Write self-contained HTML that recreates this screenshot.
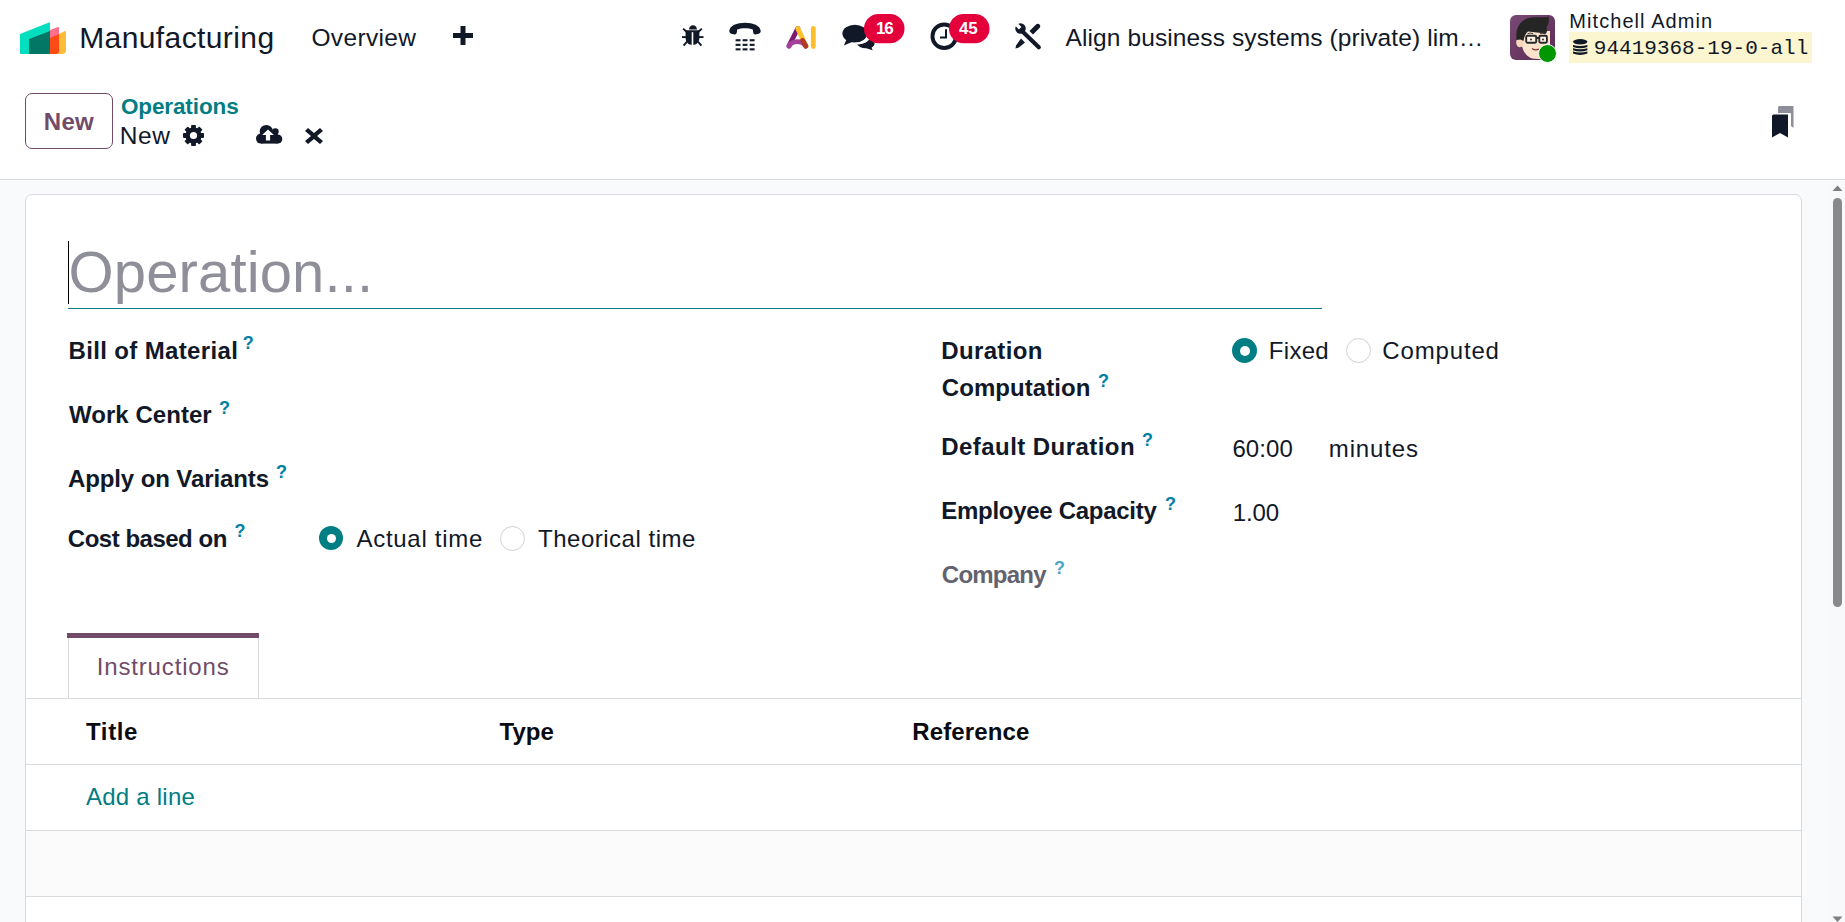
<!DOCTYPE html>
<html><head><meta charset="utf-8">
<style>
html,body{margin:0;padding:0;}
body{width:1845px;height:922px;overflow:hidden;position:relative;background:#fff;font-family:"Liberation Sans",sans-serif;color:#111827;}
.t{position:absolute;white-space:nowrap;line-height:1;}
.b{font-weight:bold;}
.ab{position:absolute;}
</style></head>
<body>


<!-- NAVBAR -->
<svg class="ab" style="left:20px;top:22px" width="48" height="33" viewBox="0 0 48 33">
  <path d="M0 12 L29 0.5 Q30 0.2 30 1.5 L30 32 L1 32 Q0 32 0 31 Z" fill="#00DEC0"/>
  <path d="M9 17 L30 9 L30 32 L9 32 Z" fill="#027766"/>
  <path d="M30 8 L38 5 Q39 4.8 39 6 L39 31 Q39 32 37.5 32 L30 32 Z" fill="#FE6F8C"/>
  <path d="M30 16 L39 12 L39 29 Q39 32 36 32 L29 32 Q30 32 30 29 Z" fill="#FE4A14"/>
  <path d="M39 12 L45 9 Q46 8.8 46 10 L46 28 Q46 32 42 32 L36 32 Q39 32 39 29 Z" fill="#FDBD38"/>
</svg>
<svg class="ab" style="left:453px;top:26px" width="20" height="19" viewBox="0 0 20 19"><path d="M7.5 0h5v7h7.5v5h-7.5v7h-5v-7h-7.5v-5h7.5z" fill="#111827"/></svg>

<!-- systray -->
<svg class="ab" style="left:660px;top:0px" width="400" height="80" viewBox="660 0 400 80">
<g fill="#111827">
<path d="M689 29.6 A4 4.4 0 0 1 697 29.6 Z"/>
<path d="M685.6 30.3 H699.4 V37.5 C699.4 42.3 696.6 45 692.5 45 C688.4 45 685.6 42.3 685.6 37.5 Z"/>
</g>
<g stroke="#111827" stroke-width="1.9" fill="none">
<path d="M682 37.1 H703.5"/>
<path d="M683.2 28.6 L687 32.2 M701.8 28.6 L698 32.2 M687 41.6 L683.6 45.6 M698 41.6 L701.4 45.6"/>
</g>
<rect x="691.7" y="32.2" width="1.6" height="13" fill="#fff"/>
<g fill="#111827">
<path d="M729.3 31 C729.8 25.5 737 22.8 745 22.8 C753 22.8 760.2 25.5 760.7 31 C760.7 32.6 759.8 33.4 758.5 33.8 L755.5 34.4 C754.2 34.6 753.4 33.8 753.2 32.6 L752.8 29.6 C748.5 27.8 741.5 27.8 737.2 29.6 L736.8 32.6 C736.6 33.8 735.8 34.6 734.5 34.4 L731.5 33.8 C730.2 33.4 729.3 32.6 729.3 31 Z"/>
<rect x="735.6" y="39.2" width="4.9" height="2.1"/><rect x="742.6" y="39.2" width="4.9" height="2.1"/><rect x="749.7" y="39.2" width="4.9" height="2.1"/>
<rect x="735.6" y="43.8" width="4.9" height="2.1"/><rect x="742.6" y="43.8" width="4.9" height="2.1"/><rect x="749.7" y="43.8" width="4.9" height="2.1"/>
<rect x="735.6" y="48.3" width="4.9" height="2.1"/><rect x="742.6" y="48.3" width="4.9" height="2.1"/><rect x="749.7" y="48.3" width="4.9" height="2.1"/>
</g>
<g fill="none" stroke-linecap="round" stroke-width="4.8">
<path d="M789 45.8 L797.8 28.4" stroke="#7E1A6E"/>
<path d="M797.8 28.4 L806 46" stroke="#FBBF2D"/>
<path d="M789 46.2 C791.5 40.5 802 39.5 805.6 46.2" stroke="#A4409A"/>
<path d="M802.6 40.4 L806 46.2" stroke="#B03A22"/>
<path d="M813.3 28.4 V46.6" stroke="#FBBF2D"/>
</g>
<g fill="#111827">
<ellipse cx="854.8" cy="33.6" rx="12.4" ry="8.9"/>
<path d="M846.5 39.5 L843.8 45.4 L852.5 41.8 Z"/>
<path d="M857 44.3 C863.5 44.3 868 41.5 869.8 37.2 C872.8 38.6 874.6 40.8 874.6 43.2 C874.6 45 873.4 46.6 871.6 47.6 L872.6 50.2 L866.3 48.2 C862.5 48.5 859 47 857 44.3 Z"/>
</g>
<path d="M855.5 43.6 C862.8 43.8 868.8 40.8 870.2 36" stroke="#fff" stroke-width="1.8" fill="none"/>
<rect x="864" y="14" width="40.5" height="29.3" rx="14.6" fill="#E4003B"/>
<circle cx="944.2" cy="36.2" r="11.75" stroke="#111827" stroke-width="3.9" fill="none"/>
<path d="M945 29.2 H947 V38.6 H940 V36.5 H945 Z" fill="#111827"/>
<rect x="949" y="14" width="40.5" height="29.3" rx="14.6" fill="#E4003B"/>
<g>
<path d="M1029.5 31 L1036 24.5 C1037 23.5 1038.6 23.5 1039.5 24.5 C1040.5 25.5 1040.5 27.1 1039.5 28 L1033 34.5 Z" fill="#111827"/>
<path d="M1021 38.6 L1025 42.4 L1018.8 47.6 L1015.4 48.6 L1016.2 45.2 Z" fill="#111827"/>
<path d="M1023 32 L1038.8 47.2" stroke="#fff" stroke-width="7.5" stroke-linecap="round"/>
<path d="M1023 32 L1038.8 47.2" stroke="#111827" stroke-width="4.2" stroke-linecap="round"/>
<circle cx="1020.5" cy="28.5" r="5.2" fill="#111827"/>
<path d="M1013.5 21.5 L1020.2 28.2" stroke="#fff" stroke-width="3.6" stroke-linecap="butt"/>
<path d="M1018 26 L1020.5 28.5" stroke="#111827" stroke-width="0"/>
</g>
</svg>

<!-- avatar -->
<div class="ab" style="left:1510px;top:15px;width:45px;height:45px;border-radius:6px;background:linear-gradient(135deg,#7a4a76,#5a2a54);overflow:hidden;">
<svg width="45" height="45" viewBox="0 0 45 45">
<path d="M11 16 C10 30 13 40 22 43.5 L40 45 L40 16 Z" fill="#fbe3cc"/>
<ellipse cx="9.8" cy="27.5" rx="3.6" ry="4.8" fill="#f8d7bb"/>
<path d="M6.5 25 C5 12 11 3.5 22 2.5 C30 2 35 3 38.5 1.5 C39.5 6 38.5 10 36.5 12 C37.5 15 37 18 35.5 19 C30 17.5 24 17 18 16.5 C15.5 18.5 14 22 13.5 26 L10.5 24.5 Z" fill="#252525"/>
<rect x="16.2" y="20.8" width="10" height="7" rx="1.2" stroke="#2a2a2a" stroke-width="1.9" fill="#fff3e6"/>
<rect x="29.3" y="20.8" width="7.6" height="7" rx="1.2" stroke="#2a2a2a" stroke-width="1.9" fill="#fff3e6"/>
<path d="M26.2 23 H29.3" stroke="#2a2a2a" stroke-width="1.8"/>
<path d="M17.5 18.8 Q20 17.5 23 18.5 M30 18.5 Q33 17.5 35 18.8" stroke="#3a3a3a" stroke-width="1" fill="none"/>
<circle cx="21" cy="24.4" r="1" fill="#333"/><circle cx="33" cy="24.4" r="1" fill="#333"/>
<path d="M22 33.5 Q25.5 36 29 34" stroke="#8a3030" stroke-width="1.2" fill="none"/>
</svg></div>
<div class="ab" style="left:1538.3px;top:43.5px;width:17px;height:17px;border-radius:50%;background:#009600;border:1px solid #fff;"></div>
<div class="ab" style="left:1569px;top:32px;width:243px;height:31px;background:#FBF5D0;"></div>
<svg class="ab" style="left:1573px;top:39px" width="15" height="17" viewBox="0 0 15 17"><g fill="#111827"><ellipse cx="7.2" cy="2.8" rx="7.2" ry="2.7"/><path d="M0 6.0 Q7.2 7.8 14.4 6.0 V8.0 Q7.2 10.6 0 8.0 Z"/><path d="M0 9.3 Q7.2 11.100000000000001 14.4 9.3 V11.3 Q7.2 13.9 0 11.3 Z"/><path d="M0 12.6 Q7.2 14.4 14.4 12.6 V14.6 Q7.2 17.2 0 14.6 Z"/></g></svg>

<!-- CONTROL PANEL -->
<div class="ab" style="left:25px;top:93px;width:86px;height:54px;border:1px solid #714B67;border-radius:7px;"></div>
<svg class="ab" style="left:183px;top:125px" width="21" height="21" viewBox="-10.5 -10.5 21 21">
<g fill="#111827"><circle r="8.1"/>
<rect x="-2.4" y="-10.5" width="4.8" height="5" rx="0.8"/>
<rect x="-2.4" y="-10.5" width="4.8" height="5" rx="0.8" transform="rotate(45)"/>
<rect x="-2.4" y="-10.5" width="4.8" height="5" rx="0.8" transform="rotate(90)"/>
<rect x="-2.4" y="-10.5" width="4.8" height="5" rx="0.8" transform="rotate(135)"/>
<rect x="-2.4" y="-10.5" width="4.8" height="5" rx="0.8" transform="rotate(180)"/>
<rect x="-2.4" y="-10.5" width="4.8" height="5" rx="0.8" transform="rotate(225)"/>
<rect x="-2.4" y="-10.5" width="4.8" height="5" rx="0.8" transform="rotate(270)"/>
<rect x="-2.4" y="-10.5" width="4.8" height="5" rx="0.8" transform="rotate(315)"/></g>
<circle r="3.6" fill="#fff"/></svg>
<svg class="ab" style="left:256px;top:124px" width="27" height="21" viewBox="0 0 27 21"><g fill="#111827">
<circle cx="5" cy="14.6" r="5"/><circle cx="10.3" cy="7.5" r="6.6"/><circle cx="19.3" cy="7.6" r="3.4"/><circle cx="21.7" cy="15" r="4.6"/><rect x="5" y="9" width="16.7" height="10.6"/></g>
<path d="M12 5.4 L17.9 11 H14.1 V16.6 H9.9 V11 H6.1 Z" fill="#fff"/></svg>
<svg class="ab" style="left:305.2px;top:128px" width="18" height="16" viewBox="0 0 18 16">
<path d="M2.5 1 L9 6 L15.5 1 M2.5 15 L9 10 L15.5 15" stroke="#111827" stroke-width="0" fill="none"/>
<path d="M3 0 L9 5 L15 0 L18 3 L12 8 L18 13 L15 16 L9 11 L3 16 L0 13 L6 8 L0 3 Z" fill="#111827"/></svg>

<!-- bookmark -->
<svg class="ab" style="left:1771px;top:105px" width="24" height="33" viewBox="0 0 24 33">
<path d="M7 2.5 Q7 1 8.5 1 H22.5 V23 L20 21 V9 Q20 8 19 8 H7 Z" fill="#8E8E98"/>
<path d="M1 11 Q1 9.5 2.5 9.5 H17 V32.5 L9 28 L1 32.5 Z" fill="#111827"/></svg>

<!-- separator + background -->
<div class="ab" style="left:0;top:179px;width:1845px;height:1px;background:#D8DADD;"></div>
<div class="ab" style="left:0;top:180px;width:1845px;height:742px;background:#F9FAFB;"></div>

<!-- scrollbar -->
<div class="ab" style="left:1830px;top:180px;width:15px;height:742px;background:#F8F9FA;"></div>
<svg class="ab" style="left:1832px;top:185px" width="11" height="7" viewBox="0 0 11 7"><path d="M5.5 0.5 L10.5 6 H0.5Z" fill="#7F7F7F"/></svg>
<div class="ab" style="left:1833px;top:198px;width:9px;height:409px;border-radius:5px;background:#898989;"></div>
<svg class="ab" style="left:1832px;top:916px" width="11" height="6" viewBox="0 0 11 6"><path d="M0.5 0.5 H10.5 L5.5 6Z" fill="#7F7F7F"/></svg>

<!-- SHEET -->
<div class="ab" style="left:25px;top:194px;width:1775px;height:740px;background:#fff;border:1px solid #D8DADD;border-radius:7px;"></div>

<!-- title -->
<div class="ab" style="left:68px;top:241px;width:1px;height:63px;background:#000;"></div>
<div class="ab" style="left:68px;top:307.5px;width:1254px;height:1.5px;background:#017E84;border-radius:1px"></div>

<!-- left column labels -->

<!-- radios cost -->
<div class="ab" style="left:319px;top:526px;width:24px;height:24px;border-radius:50%;background:#017E84;"></div>
<div class="ab" style="left:326.5px;top:533.5px;width:9px;height:9px;border-radius:50%;background:#fff;"></div>
<div class="ab" style="left:500px;top:526px;width:23px;height:23px;border-radius:50%;border:1px solid #D0D2D6;background:#fff"></div>

<!-- right column -->
<div class="ab" style="left:1232px;top:338px;width:25px;height:25px;border-radius:50%;background:#017E84;"></div>
<div class="ab" style="left:1239.5px;top:345.5px;width:10px;height:10px;border-radius:50%;background:#fff;"></div>
<div class="ab" style="left:1346px;top:338px;width:23px;height:23px;border-radius:50%;border:1px solid #D0D2D6;background:#fff"></div>




<!-- tabs -->
<div class="ab" style="left:68px;top:637px;width:189px;height:61px;border-left:1px solid #D8DADD;border-right:1px solid #D8DADD;background:#fff"></div>
<div class="ab" style="left:67px;top:633px;width:192px;height:4.5px;background:#714B67;"></div>
<div class="ab" style="left:26px;top:698px;width:1775px;height:1px;background:#D8DADD;"></div>

<!-- table -->
<div class="ab" style="left:26px;top:764px;width:1775px;height:1px;background:#D8DADD;"></div>
<div class="ab" style="left:26px;top:830px;width:1775px;height:1px;background:#D8DADD;"></div>
<div class="ab" style="left:26px;top:831px;width:1775px;height:65px;background:#FBFBFB;"></div>
<div class="ab" style="left:26px;top:896px;width:1775px;height:1px;background:#D8DADD;"></div>

<div class="t" style="left:79.20px;top:23.00px;font-size:30px;letter-spacing:0.400px;">Manufacturing</div>
<div class="t" style="left:311.40px;top:26.00px;font-size:24.5px;letter-spacing:0.360px;">Overview</div>
<div class="t" style="left:1065.56px;top:26.00px;font-size:24.5px;letter-spacing:0.107px;">Align business systems (private) lim…</div>
<div class="t" style="left:1569.28px;top:11.30px;font-size:20px;letter-spacing:1.071px;">Mitchell Admin</div>
<div class="t" style="left:1593.80px;top:37.60px;font-size:21px;font-family:'Liberation Mono',monospace;letter-spacing:0.015px;">94419368-19-0-all</div>
<div class="t b" style="left:43.80px;top:110.00px;font-size:24px;letter-spacing:0.300px;color:#714B67;">New</div>
<div class="t b" style="left:120.88px;top:96.00px;font-size:22.5px;letter-spacing:-0.107px;color:#017E84;">Operations</div>
<div class="t" style="left:119.68px;top:124.00px;font-size:24.5px;letter-spacing:0.660px;">New</div>
<div class="t" style="left:68.56px;top:243.20px;font-size:58px;letter-spacing:0.131px;color:#8F8F9A;">Operation...</div>
<div class="t b" style="left:68.55px;top:339.00px;font-size:24px;letter-spacing:0.352px;">Bill of Material</div>
<div class="t b" style="left:69.04px;top:403.00px;font-size:24px;letter-spacing:0.036px;">Work Center</div>
<div class="t b" style="left:67.90px;top:467.00px;font-size:24px;letter-spacing:-0.097px;">Apply on Variants</div>
<div class="t b" style="left:67.84px;top:527.00px;font-size:24px;letter-spacing:-0.490px;">Cost based on</div>
<div class="t" style="left:356.48px;top:527.00px;font-size:24px;letter-spacing:0.708px;">Actual time</div>
<div class="t" style="left:538.00px;top:527.00px;font-size:24px;letter-spacing:0.508px;">Theorical time</div>
<div class="t b" style="left:941.26px;top:339.00px;font-size:24px;letter-spacing:0.360px;">Duration</div>
<div class="t b" style="left:941.86px;top:376.00px;font-size:24px;letter-spacing:0.060px;">Computation</div>
<div class="t" style="left:1268.80px;top:339.00px;font-size:24px;letter-spacing:0.300px;">Fixed</div>
<div class="t" style="left:1382.32px;top:339.00px;font-size:24px;letter-spacing:0.840px;">Computed</div>
<div class="t b" style="left:941.26px;top:435.30px;font-size:24px;letter-spacing:0.448px;">Default Duration</div>
<div class="t b" style="left:941.26px;top:499.00px;font-size:24px;letter-spacing:-0.285px;">Employee Capacity</div>
<div class="t b" style="left:941.86px;top:563.00px;font-size:24px;letter-spacing:-0.780px;color:#63636F;">Company</div>
<div class="t" style="left:1232.38px;top:437.00px;font-size:24px;letter-spacing:0.120px;">60:00</div>
<div class="t" style="left:1328.84px;top:437.00px;font-size:24px;letter-spacing:0.860px;">minutes</div>
<div class="t" style="left:1232.74px;top:500.70px;font-size:24px;letter-spacing:-0.080px;">1.00</div>
<div class="t" style="left:96.68px;top:655.30px;font-size:24px;letter-spacing:0.851px;color:#714B67;">Instructions</div>
<div class="t b" style="left:86.02px;top:720.20px;font-size:24px;letter-spacing:0.630px;color:#0b0b12;">Title</div>
<div class="t b" style="left:499.50px;top:720.20px;font-size:24px;color:#0b0b12;">Type</div>
<div class="t b" style="left:912.34px;top:720.20px;font-size:24px;letter-spacing:0.105px;color:#0b0b12;">Reference</div>
<div class="t" style="left:86.02px;top:785.40px;font-size:24px;letter-spacing:0.227px;color:#017E84;">Add a line</div>
<div class="t b" style="left:875.96px;top:20.00px;font-size:17px;letter-spacing:-1.080px;color:#fff;">16</div>
<div class="t b" style="left:959.00px;top:20.00px;font-size:17px;letter-spacing:-0.240px;color:#fff;">45</div>
<div class="t b" style="left:242.82px;top:334.40px;font-size:18px;color:#0180a5;">?</div>
<div class="t b" style="left:218.94px;top:398.80px;font-size:18px;color:#0180a5;">?</div>
<div class="t b" style="left:275.88px;top:462.90px;font-size:18px;color:#0180a5;">?</div>
<div class="t b" style="left:234.40px;top:522.30px;font-size:18px;color:#0180a5;">?</div>
<div class="t b" style="left:1097.90px;top:372.40px;font-size:18px;color:#0180a5;">?</div>
<div class="t b" style="left:1141.92px;top:430.80px;font-size:18px;color:#0180a5;">?</div>
<div class="t b" style="left:1164.96px;top:494.60px;font-size:18px;color:#0180a5;">?</div>
<div class="t b" style="left:1053.90px;top:559.00px;font-size:18px;color:#4FA6C0;">?</div>
</body></html>
